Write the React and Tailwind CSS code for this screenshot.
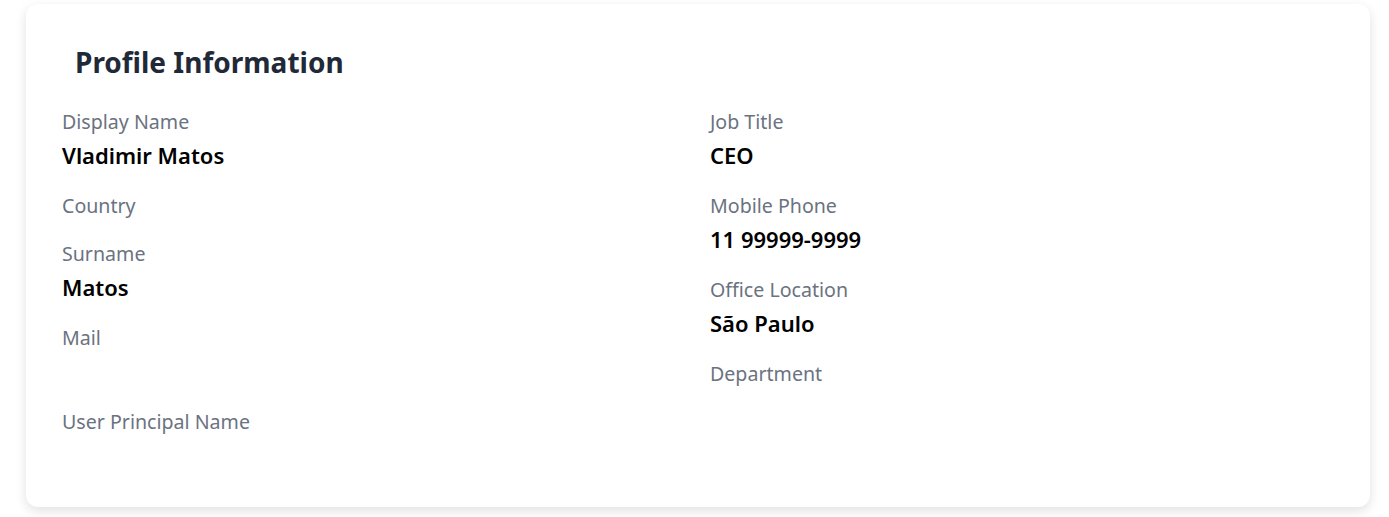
export default function App() {
  const left = [
    { label: "Display Name", value: "Vladimir Matos" },
    { label: "Country" },
    { label: "Surname", value: "Matos" },
    { label: "Mail", value: "\u00a0" },
    { label: "User Principal Name" },
  ];
  const right = [
    { label: "Job Title", value: "CEO" },
    { label: "Mobile Phone", value: "11 99999-9999" },
    { label: "Office Location", value: "São Paulo" },
    { label: "Department" },
  ];
  const Col = ({ items }) => (
    <div className="flex flex-col gap-5">
      {items.map((it) => (
        <div key={it.label} className="flex flex-col">
          <div className="text-[19.6px] leading-7 text-[#6b7280]">{it.label}</div>
          {it.value && (
            <div className="mt-[5px] mb-[3px] text-[22px] leading-7 font-semibold text-black whitespace-pre">
              {it.value}
            </div>
          )}
        </div>
      ))}
    </div>
  );
  return (
    <div
      className="min-h-[517px] bg-white pl-[26px] pt-1 pb-[10px]"
      style={{ fontFamily: '"Noto Sans", "Open Sans", Arial, sans-serif' }}
    >
      <div className="w-[1344px] h-[503px] rounded-xl bg-white shadow-[0_4px_12px_rgba(0,0,0,0.12)] px-9 pt-10">
        <h2 className="px-[13px] text-[28px] leading-9 font-bold text-[#1f2937]">Profile Information</h2>
        <div className="mt-[28px] grid grid-cols-2 gap-6">
          <Col items={left} />
          <Col items={right} />
        </div>
      </div>
    </div>
  );
}
